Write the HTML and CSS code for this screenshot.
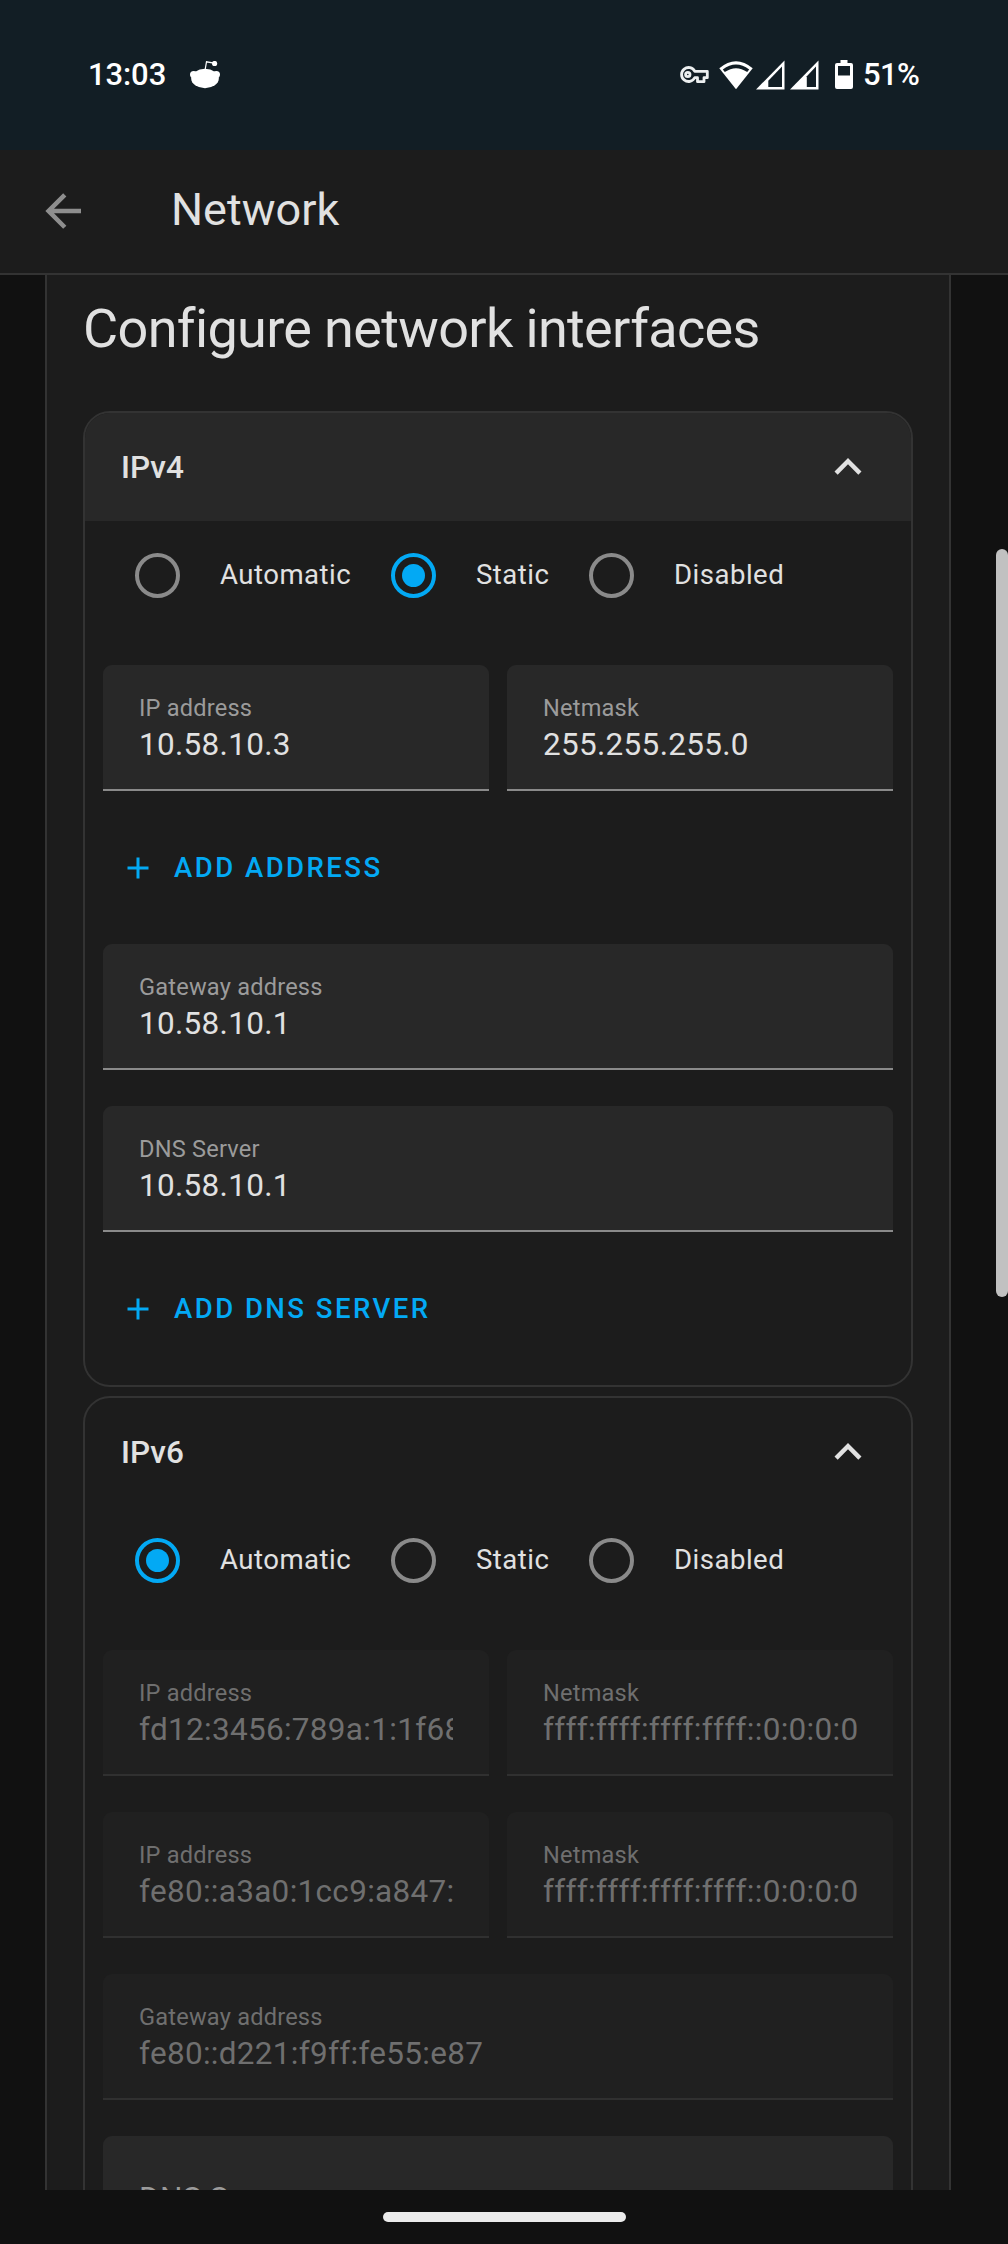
FILE: index.html
```html
<!DOCTYPE html>
<html lang="en">
<head>
<meta charset="utf-8">
<title>Network</title>
<link rel="stylesheet" href="styles.css">
</head>
<body>
<div class="screen">
  <div class="status-bar">
    <span class="clock">13:03</span>
    <svg class="notification" width="30" height="28" viewBox="190 62 30 28" fill="#fff">
      <ellipse cx="205" cy="79.5" rx="13.8" ry="9.7"/>
      <circle cx="193.700" cy="75.600" r="3.700"/><circle cx="216.300" cy="75.600" r="3.700"/>
      <path d="M205 71.500L206.500 62.800L214 64.200" fill="none" stroke="#fff" stroke-width="1.200"/>
      <circle cx="214.600" cy="64.500" r="2.600"/>
    </svg>
    <div class="status-icons">
      <svg width="29" height="18" viewBox="680 67 29 18" fill="none" stroke="#eceff0" stroke-width="2.800" stroke-linejoin="round">
        <path d="M694.800 72.300A7 7 0 1 0 694.800 78.700H697.500V82.700H704V78.700H707.300V72.300Z"/>
        <circle cx="687.800" cy="75.500" r="2.200"/>
      </svg>
      <svg class="wifi" width="34" height="29" viewBox="719 61 34 29">
        <path d="M736 89.200L719.300 68.300Q736 54.200 752.700 68.300Z" fill="#fff"/>
        <path d="M722.800 69.600Q736 59.500 749.200 69.600L747.200 72.100Q736 64.200 724.800 72.100Z" fill="#121e25"/>
      </svg>
      <svg class="signal" width="29" height="30" viewBox="0 0 29 30">
        <path d="M28.500 .5V29.500H0Z" fill="#fff"/><path d="M26 6.500V27H12.300V20.800Z" fill="#121e25"/>
      </svg>
      <svg class="signal-two" width="29" height="30" viewBox="0 0 29 30">
        <path d="M28.500 .5V29.500H0Z" fill="#fff"/><path d="M26 6.500V27H16.800V16.200Z" fill="#121e25"/>
      </svg>
      <svg class="battery" width="18" height="30" viewBox="0 0 18 30">
        <path d="M5.500 0H12.500V3H16Q18 3 18 5V27Q18 29 16 29H2Q0 29 0 27V5Q0 3 2 3H5.500Z" fill="#fff"/>
        <path d="M3 6H15V15.500H3Z" fill="#121e25"/>
      </svg>
      <span class="percent">51%</span>
    </div>
  </div>

  <header class="toolbar">
    <svg class="back" width="54" height="54" viewBox="0 0 24 24" fill="#8e8e8e"><path d="M20,11V13H8L13.500,18.500L12.080,19.920L4.160,12L12.080,4.080L13.500,5.500L8,11H20Z"/></svg>
    <h1 class="toolbar-title">Network</h1>
  </header>

  <main class="content">
    <section class="card">
      <h2 class="card-title">Configure network interfaces</h2>

      <div class="panel">
        <div class="panel-header focused">
          <span>IPv4</span>
          <svg width="54" height="54" viewBox="0 0 24 24" fill="#e1e1e1"><path d="M7.410,15.410L12,10.830L16.590,15.410L18,14L12,8L6,14L7.410,15.410Z"/></svg>
        </div>
        <div class="panel-body">
          <div class="radios">
            <span class="radio"></span><span class="radio-label automatic">Automatic</span>
            <span class="radio checked"></span><span class="radio-label static">Static</span>
            <span class="radio"></span><span class="radio-label">Disabled</span>
          </div>
          <div class="row">
            <div class="field"><span class="label">IP address</span><span class="value">10.58.10.3</span></div>
            <div class="field"><span class="label">Netmask</span><span class="value">255.255.255.0</span></div>
          </div>
          <div class="add">
            <svg width="36" height="36" viewBox="0 0 24 24" fill="#03a9f4"><path d="M19,13H13V19H11V13H5V11H11V5H13V11H19V13Z"/></svg>
            <span>ADD ADDRESS</span>
          </div>
          <div class="row">
            <div class="field"><span class="label">Gateway address</span><span class="value">10.58.10.1</span></div>
          </div>
          <div class="row spaced">
            <div class="field"><span class="label">DNS Server</span><span class="value">10.58.10.1</span></div>
          </div>
          <div class="add">
            <svg width="36" height="36" viewBox="0 0 24 24" fill="#03a9f4"><path d="M19,13H13V19H11V13H5V11H11V5H13V11H19V13Z"/></svg>
            <span>ADD DNS SERVER</span>
          </div>
        </div>
      </div>

      <div class="panel">
        <div class="panel-header">
          <span>IPv6</span>
          <svg width="54" height="54" viewBox="0 0 24 24" fill="#e1e1e1"><path d="M7.410,15.410L12,10.830L16.590,15.410L18,14L12,8L6,14L7.410,15.410Z"/></svg>
        </div>
        <div class="panel-body">
          <div class="radios">
            <span class="radio checked"></span><span class="radio-label automatic">Automatic</span>
            <span class="radio"></span><span class="radio-label static">Static</span>
            <span class="radio"></span><span class="radio-label">Disabled</span>
          </div>
          <div class="row">
            <div class="field disabled"><span class="label">IP address</span><span class="value">fd12:3456:789a:1:1f68</span></div>
            <div class="field disabled"><span class="label">Netmask</span><span class="value">ffff:ffff:ffff:ffff::0:0:0:0</span></div>
          </div>
          <div class="row spaced">
            <div class="field disabled"><span class="label">IP address</span><span class="value">fe80::a3a0:1cc9:a847:</span></div>
            <div class="field disabled"><span class="label">Netmask</span><span class="value">ffff:ffff:ffff:ffff::0:0:0:0</span></div>
          </div>
          <div class="row spaced">
            <div class="field disabled"><span class="label">Gateway address</span><span class="value">fe80::d221:f9ff:fe55:e87</span></div>
          </div>
          <div class="row spaced">
            <div class="field empty"><span class="placeholder">DNS Server</span></div>
          </div>
        </div>
      </div>
    </section>
  </main>

  <div class="nav-bar"><span class="home-handle"></span></div>
  <div class="scrollbar"></div>
</div>
</body>
</html>
```
FILE: styles.css
```css
* { box-sizing: border-box; }

body {
  margin: 0;
  background: #111;
  color: #e1e1e1;
  font-family: Roboto, "Noto Sans", sans-serif;
}

svg { display: block; flex: none; }

.screen {
  position: relative;
  display: flex;
  flex-direction: column;
  width: 1008px;
  height: 2244px;
  overflow: hidden;
}

/* System status bar */
.status-bar {
  flex: none;
  display: flex;
  align-items: center;
  height: 150px;
  padding: 0 91px 0 88px;
  background: #121e25;
  color: #fff;
  font: 500 31px/40px Roboto, sans-serif;
}

.clock { width: 102px; letter-spacing: -.1px; }
.status-icons { display: flex; align-items: center; margin-left: auto; }
.wifi { margin-left: 10px; }
.signal { margin-left: 3px; }
.signal-two { margin-left: 5px; }
.battery { margin-left: 16px; }
.percent { width: 54px; margin-left: 10px; letter-spacing: -.6px; white-space: nowrap; }

/* Page toolbar */
.toolbar {
  flex: none;
  display: flex;
  align-items: center;
  gap: 81px;
  height: 125px;
  padding-left: 36px;
  border-bottom: 2px solid #333;
  background: #1c1c1c;
}

.back { margin-bottom: 2px; }
.toolbar-title { margin: 0 0 4px; font-size: 45px; font-weight: 400; line-height: 54px; }

.content { flex: 1; min-height: 0; overflow: hidden; padding: 0 57px 0 45px; }

.card {
  padding: 22px 36px 0;
  border: solid #333;
  border-width: 0 2px;
  background: #1c1c1c;
}

.card-title { margin: 0 0 50px; font-size: 54px; font-weight: 400; line-height: 64px; letter-spacing: -.65px; white-space: nowrap; }

/* Expansion panels */
.panel { margin-bottom: 9px; border: 2px solid #333; border-radius: 27px; overflow: hidden; }

.panel-header {
  display: flex;
  align-items: center;
  justify-content: space-between;
  height: 108px;
  padding: 0 36px;
  font-size: 31.5px;
  font-weight: 500;
}

.panel-header.focused { background: #282828; }
.panel-body { padding: 0 18px; }

.radios { display: flex; align-items: center; height: 109px; margin-bottom: 35px; padding-left: 32px; }

.radio {
  flex: none;
  display: flex;
  align-items: center;
  justify-content: center;
  width: 45px;
  height: 45px;
  border: 4px solid #8a8a8a;
  border-radius: 50%;
}

.radio.checked { border-color: #03a9f4; }
.radio.checked::before { content: ""; width: 23px; height: 23px; border-radius: 50%; background: #03a9f4; }
.radio-label { padding: 0 0 2px 40px; font-size: 27.56px; letter-spacing: .49px; }
.automatic { width: 211px; }
.static { width: 153px; }

/* Text fields */
.row { display: flex; gap: 18px; }
.row.spaced { margin-top: 36px; }

.field {
  flex: 1 1 0;
  min-width: 0;
  display: flex;
  flex-direction: column;
  height: 126px;
  padding: 29px 36px 0;
  border-bottom: 2px solid #8a8a8a;
  border-radius: 9px 9px 0 0;
  background: #282828;
}

.label { color: #9b9b9b; font-size: 23.6px; line-height: 28px; letter-spacing: .2px; }
.value { margin-top: 3px; overflow: hidden; font-size: 31.5px; line-height: 40px; letter-spacing: .3px; white-space: nowrap; }
.field.disabled { border-color: #303030; background: #202020; }
.disabled .label, .disabled .value { color: #6f6f6f; }
.field.empty { justify-content: center; padding-top: 0; }
.placeholder { color: #9b9b9b; font-size: 31.5px; letter-spacing: .3px; }

/* Text buttons */
.add {
  display: flex;
  align-items: center;
  gap: 18px;
  height: 153px;
  padding-left: 17px;
  color: #03a9f4;
  font-size: 27.56px;
  font-weight: 500;
  letter-spacing: 2.46px;
}

/* Gesture navigation */
.nav-bar { flex: none; display: flex; justify-content: center; height: 54px; padding-top: 22px; background: #111; }
.home-handle { width: 243px; height: 10px; border-radius: 5px; background: #ececec; }

.scrollbar { position: absolute; top: 549px; right: 0; width: 12px; height: 748px; border-radius: 6px; background: #c1c1c1; }
```
